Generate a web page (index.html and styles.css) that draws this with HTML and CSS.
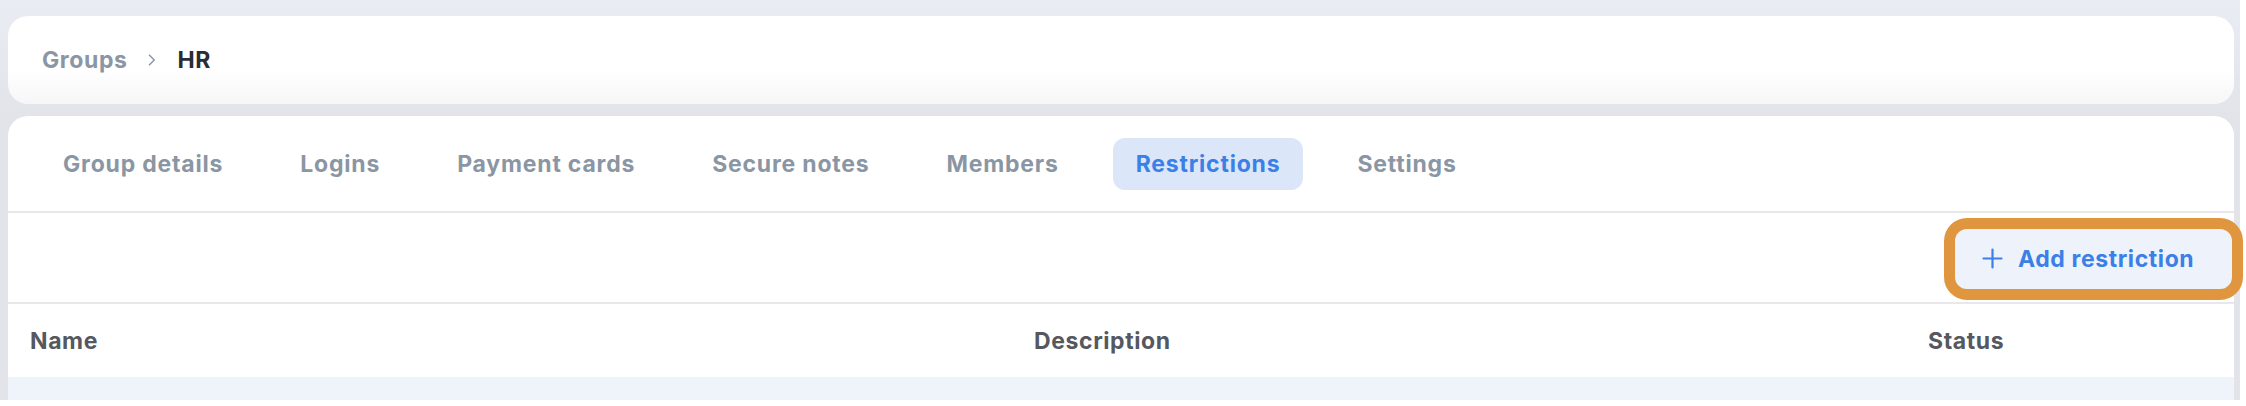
FILE: index.html
```html
<!DOCTYPE html>
<html lang="en">
<head>
<meta charset="utf-8">
<title>Groups - HR - Restrictions</title>
<link rel="stylesheet" href="styles.css">
</head>
<body>
<div class="page">
  <nav class="crumbs card">
    <span class="crumb">Groups</span>
    <svg class="chev" width="8" height="12" viewBox="0 0 8 12"><path d="M1.5 1.2 L6.3 6 L1.5 10.8" fill="none" stroke="#8f9aa6" stroke-width="1.6" stroke-linecap="round" stroke-linejoin="round"/></svg>
    <span class="crumb current">HR</span>
  </nav>
  <section class="panel card">
    <div class="tabs">
      <span class="tab">Group details</span>
      <span class="tab">Logins</span>
      <span class="tab">Payment cards</span>
      <span class="tab">Secure notes</span>
      <span class="tab">Members</span>
      <span class="tab active">Restrictions</span>
      <span class="tab">Settings</span>
    </div>
    <div class="toolbar">
      <button class="add-btn" type="button">
        <svg width="21" height="21" viewBox="0 0 21 21"><path d="M10.5 1.5 V19.5 M1.5 10.5 H19.5" stroke="#3d7fe6" stroke-width="2.2" stroke-linecap="round"/></svg>
        <span>Add restriction</span>
      </button>
    </div>
    <div class="thead">
      <div class="th">Name</div>
      <div class="th">Description</div>
      <div class="th">Status</div>
    </div>
    <div class="trow"></div>
  </section>
</div>
</body>
</html>
```

FILE: styles.css
```css
* { box-sizing: border-box; }
html, body {
  margin: 0;
  padding: 0;
  background: #ffffff;
}
body {
  font-family: "Inter", "Noto Sans", sans-serif;
  font-weight: 700;
  font-size: 23px;
  letter-spacing: 0.6px;
  width: 2246px;
  height: 406px;
  overflow: hidden;
}
.page {
  width: 2240px;
  height: 400px;
  padding: 16px 6px 0 8px;
  display: flex;
  flex-direction: column;
  gap: 12px;
  background: linear-gradient(to bottom, #eaecf4 0px, #e3e4ea 110px, #e3e4ea 100%);
}
.card {
  background: #ffffff;
  border-radius: 20px;
}
.crumbs {
  height: 88px;
  flex: none;
  display: flex;
  align-items: center;
  gap: 21px;
  padding-left: 34px;
  background: linear-gradient(to bottom, #ffffff 0%, #ffffff 62%, #f6f6f8 100%);
}
.crumb { color: #8a96a3; }
.crumb.current { color: #2a2d34; }
.chev { display: block; }
.panel {
  flex: 1;
  border-radius: 20px 20px 0 0;
  display: flex;
  flex-direction: column;
}
.tabs {
  height: 97px;
  flex: none;
  display: flex;
  align-items: center;
  gap: 31px;
  padding-left: 32px;
  border-bottom: 2px solid #e8e8eb;
}
.tab {
  height: 52px;
  padding: 0 23px;
  border-radius: 12px;
  display: flex;
  align-items: center;
  color: #8a96a3;
  letter-spacing: 0.8px;
}
.tab.active {
  background: #dce6f9;
  color: #3b80e6;
}
.toolbar {
  height: 91px;
  flex: none;
  display: flex;
  align-items: center;
  justify-content: flex-end;
  padding: 2px 2px 0 0;
  border-bottom: 2px solid #e8e8eb;
}
.add-btn {
  width: 277px;
  height: 60px;
  border: none;
  border-radius: 12px;
  background: #eef2fb;
  color: #3b80e6;
  font: inherit;
  letter-spacing: 0.6px;
  display: flex;
  align-items: center;
  gap: 15px;
  padding: 0 0 0 27px;
  outline: 11px solid #e0963f;
  outline-offset: 0;
}
.add-btn svg { display: block; flex: none; }
.thead {
  height: 73px;
  flex: none;
  display: grid;
  grid-template-columns: 1004px 894px 1fr;
  align-items: center;
  padding-left: 22px;
}
.th { color: #55585f; }
.trow {
  flex: 1;
  background: #eff3fa;
}
```
